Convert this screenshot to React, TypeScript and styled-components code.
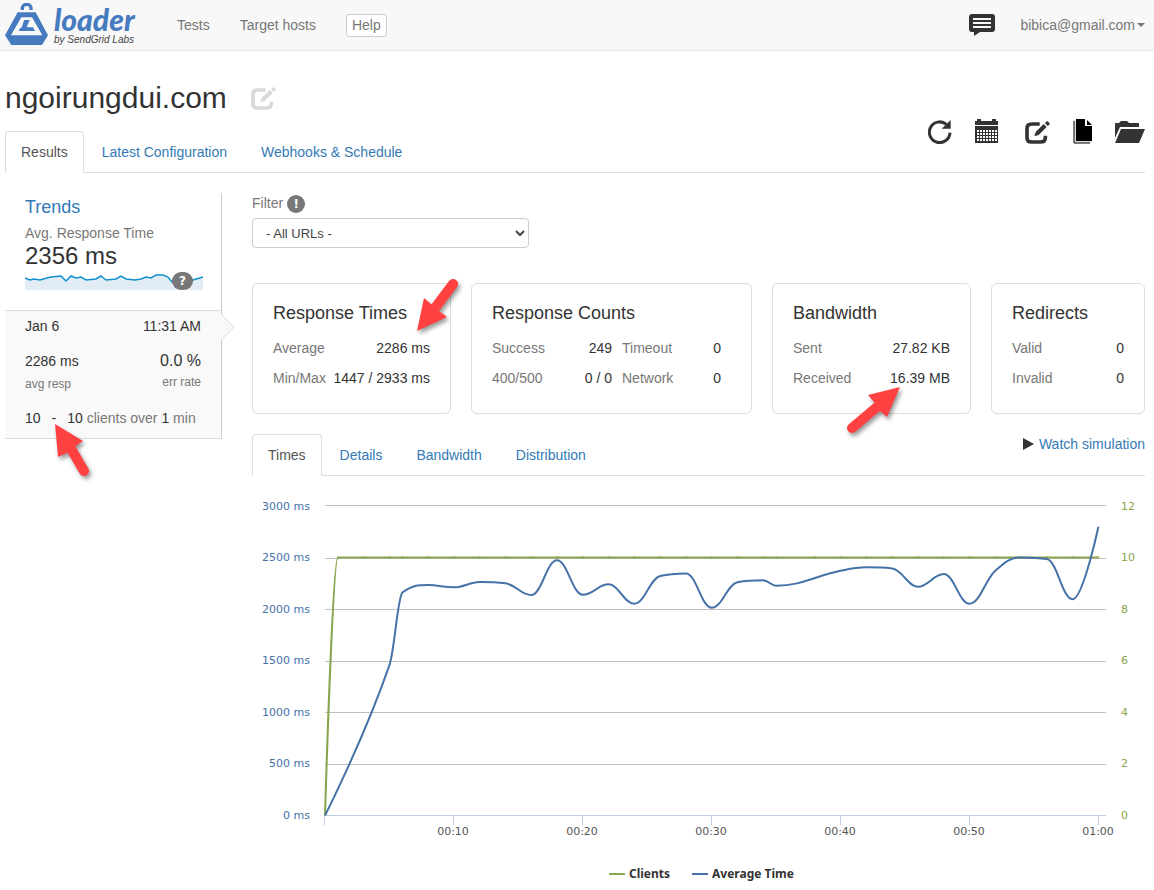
import React from "react";
import styled, { createGlobalStyle, css } from "styled-components";

const GlobalStyle = createGlobalStyle`
  *, *::before, *::after { box-sizing: border-box; }
  body {
    margin: 0;
    background: #fff;
    color: #333;
    font: 14px/20px "Liberation Sans", Arial, sans-serif;
  }
  a { color: #337ab7; text-decoration: none; }
  h1, h2, h3, p, dl, dd { margin: 0; font-weight: 400; }
`;

/* ---------- top bar ---------- */

const TopBar = styled.header`
  display: flex;
  align-items: center;
  height: 51px;
  padding: 0 9px 0 5px;
  background: #f8f8f8;
  border-bottom: 1px solid #e7e7e7;
`;

const Brand = styled.a`
  display: flex;
  align-items: flex-start;
  align-self: flex-start;
  gap: 6px;
  width: 156px;
  padding-top: 3px;
`;

const BrandText = styled.span`
  display: flex;
  flex-direction: column;
`;

const BrandName = styled.span`
  color: #467bbf;
  font: italic 900 30px/32px Lato, "Open Sans", sans-serif;
`;

const BrandLine = styled.span`
  color: #444;
  font-size: 10px;
  line-height: 10px;
  font-style: italic;
  white-space: nowrap;
`;

const MainNav = styled.nav`
  display: flex;
  align-items: center;
  gap: 30px;
  padding-left: 16px;
  flex: 1;
`;

const NavLink = styled.a<{ $boxed?: boolean }>`
  color: #777;
  ${(p) =>
    p.$boxed &&
    css`
      padding: 0 5px;
      line-height: 21px;
      background: #fff;
      border: 1px solid #ccc;
      border-radius: 3px;
    `}
`;

const PlainButton = styled.button`
  display: flex;
  align-items: center;
  padding: 0;
  border: 0;
  background: none;
  color: #333;
  font: inherit;
  cursor: pointer;
`;

const AccountButton = styled(PlainButton)`
  gap: 2px;
  margin-left: 25px;
  color: #777;
`;

const Caret = styled.span`
  border: 4px solid transparent;
  border-top-color: #777;
  border-bottom: 0;
`;

/* ---------- page heading ---------- */

const Page = styled.div`
  padding: 0 9px 0 5px;
`;

const PageHead = styled.div`
  display: flex;
  justify-content: space-between;
  align-items: flex-end;
  margin-top: 30px;
  border-bottom: 1px solid #ddd;
`;

const TitleRow = styled.div`
  display: flex;
  align-items: center;
  gap: 21px;
  height: 34px;
  margin-bottom: 16px;
`;

const Title = styled.h1`
  font-size: 30px;
  line-height: 34px;
`;

const Toolbar = styled.div`
  display: flex;
  align-items: center;
  gap: 23px;
  height: 27px;
  margin-bottom: 27px;
`;

const Tabs = styled.nav`
  display: flex;
  gap: 2px;
  margin-bottom: -1px;
`;

const Tab = styled.a<{ $active?: boolean }>`
  padding: 10px 15px;
  border-width: 1px;
  border-style: solid;
  border-color: ${(p) => (p.$active ? "#ddd #ddd #fff" : "transparent")};
  border-radius: 4px 4px 0 0;
  background: ${(p) => (p.$active ? "#fff" : "none")};
  color: ${(p) => (p.$active ? "#555" : "#337ab7")};
`;

const Columns = styled.div`
  display: flex;
  align-items: flex-start;
  gap: 30px;
  padding-top: 20px;
`;

/* ---------- sidebar ---------- */

const Sidebar = styled.aside`
  flex: none;
  width: 217px;
  border-right: 1px solid #ccc;
`;

const Trends = styled.section`
  position: relative;
  height: 117px;
  padding: 4px 18px 0 20px;
`;

const TrendsTitle = styled.h2`
  font-size: 18px;
  line-height: 20px;
`;

const Muted = styled.p`
  margin-top: 6px;
  color: #777;
`;

const BigValue = styled.p`
  font-size: 24px;
  line-height: 26px;
`;

const Spark = styled.svg`
  display: block;
  width: 100%;
  height: 18px;
  margin-top: 3px;
`;

const Badge = styled.span<{ $floating?: boolean }>`
  display: inline-flex;
  justify-content: center;
  align-items: center;
  width: ${(p) => (p.$floating ? 21 : 18)}px;
  height: 18px;
  border-radius: 9px;
  background: #777;
  color: #fff;
  font: bold 12px/18px "DejaVu Sans", sans-serif;
  ${(p) =>
    p.$floating &&
    css`
      position: absolute;
      right: 28px;
      bottom: 20px;
    `}
`;

const Run = styled.section`
  position: relative;
  height: 129px;
  padding: 5px 20px 0;
  border: solid #ddd;
  border-width: 1px 0;
  background: #f9f9f9;
`;

const RunRow = styled.div<{ $gap?: number; $small?: boolean }>`
  display: flex;
  justify-content: space-between;
  margin-top: ${(p) => p.$gap ?? 0}px;
  ${(p) => p.$small && "color: #777; font-size: 12px;"}
`;

const ErrorRate = styled.span`
  font-size: 16px;
`;

const ErrorLabel = styled.span`
  line-height: 16px;
`;

const ClientLine = styled.p`
  margin-top: 14px;
  color: #777;
  white-space: nowrap;
  b { color: #333; font-weight: 400; }
  i { margin: 0 11px; color: #333; font-style: normal; }
`;

const RunPointer = styled.svg`
  position: absolute;
  top: 2px;
  right: -14px;
  width: 14px;
  height: 28px;
`;

/* ---------- results ---------- */

const Results = styled.main`
  flex: 1;
  min-width: 0;
`;

const FilterLabel = styled.label`
  display: flex;
  align-items: flex-end;
  gap: 4px;
  color: #777;
`;

const FilterSelect = styled.select`
  display: block;
  width: 277px;
  height: 30px;
  margin-top: 5px;
  padding: 0 0 0 9px;
  border: 1px solid #ccc;
  border-radius: 4px;
  background: #fff;
  color: #444;
  font: 13px "Liberation Sans", Arial, sans-serif;
`;

const Cards = styled.div`
  display: grid;
  grid-template-columns: 199fr 281fr 199fr 154fr;
  gap: 20px;
  margin-top: 35px;
`;

const Card = styled.section`
  position: relative;
  min-width: 0;
  height: 131px;
  padding: 19px 20px;
  border: 1px solid #ddd;
  border-radius: 6px;
`;

const CardTitle = styled.h3`
  margin-bottom: 10px;
  font-size: 18px;
  line-height: 20px;
`;

const StatGroups = styled.div`
  display: grid;
  grid-template-columns: 120fr 99fr;
  gap: 10px;
  padding-right: 10px;
`;

const Stat = styled.div`
  display: flex;
  justify-content: space-between;
  line-height: 30px;
  white-space: nowrap;
  dt { color: #777; }
`;

const ChartHead = styled.div`
  display: flex;
  justify-content: space-between;
  align-items: flex-start;
  margin-top: 20px;
  border-bottom: 1px solid #ddd;
`;

const SimulationLink = styled.a`
  display: flex;
  align-items: center;
  gap: 5px;
`;

const ChartSvg = styled.svg`
  display: block;
  width: 100%;
  height: auto;
  font: 11px "DejaVu Sans", sans-serif;
`;

const Arrow = styled.svg<{ $top: number; $right: number }>`
  position: absolute;
  top: ${(p) => p.$top}px;
  right: ${(p) => p.$right}px;
  z-index: 2;
  overflow: visible;
  pointer-events: none;
  filter: drop-shadow(2px 3px 2px rgba(0, 0, 0, 0.4));
  path { fill: #ff4141; }
  line { stroke: #ff4141; stroke-width: 10; stroke-linecap: round; }
`;

/* ---------- drawings ---------- */

const Logo = () => (
  <svg width="43" height="42" viewBox="15 9 129 126" aria-hidden="true">
    <path d="M67 30v-6a13 11 0 0 1 26 0v6" fill="none" stroke="#467bbf" strokeWidth="10" />
    <path
      fill="#467bbf"
      fillRule="evenodd"
      d="M53 37H107L144 106L126 135H34L15 106ZM64 52L33 106H127L96 52Z"
    />
    <path fill="#467bbf" d="M72 60H89L80 82H99L105 93H56L61 83H65Z" />
  </svg>
);

const ChatIcon = () => (
  <svg width="26" height="22" viewBox="0 0 26 22" aria-hidden="true">
    <path fill="#333" d="M3 0H23a3 3 0 0 1 3 3V15a3 3 0 0 1-3 3H11L5 22V18H3a3 3 0 0 1-3-3V3a3 3 0 0 1 3-3z" />
    <path stroke="#f8f8f8" strokeWidth="2" d="M4 5H22M4 9H22M4 13H22" />
  </svg>
);

const EditIcon = ({ color }: { color: string }) => (
  <svg width="28" height="24" viewBox="-9 -3 84 72" aria-hidden="true">
    <path
      d="M44 9H20Q6 9 6 22V50Q6 63 20 63H46Q61 63 61 50V44"
      fill="none"
      stroke={color}
      strokeWidth="11"
    />
    <path fill={color} d="M28 46L32 33L56 9L65 18L41 42ZM60 6L65 1Q68 0 70 3L74 7Q75 9 73 11L68 15Z" />
  </svg>
);

const RefreshIcon = () => (
  <svg width="24" height="25" viewBox="83 357 72 75" aria-hidden="true">
    <path d="M149 398A31 31 0 1 1 138 373" fill="none" stroke="#333" strokeWidth="9" />
    <path fill="#333" d="M151 360V386H124Z" />
  </svg>
);

const CalendarIcon = () => (
  <svg width="24" height="25" viewBox="0 0 24 25" aria-hidden="true">
    <path fill="#333" d="M0 2H2V0H6V2H17V0H21V2H23V6H0ZM0 7H23V24H0Z" />
    <path
      stroke="#fff"
      strokeWidth="2"
      strokeDasharray="2 1"
      d="M2 12H22M2 15H22M2 18H22M2 21H22"
    />
  </svg>
);

const FilesIcon = () => (
  <svg width="19" height="25" viewBox="0 0 19 25" aria-hidden="true">
    <path fill="#000" d="M3 0H12V7H19V22H3ZM14 1L19 6H14Z" />
    <path d="M2 1V23H18" fill="none" stroke="#bbb" strokeWidth="1" />
    <path d="M1 2V24H17" fill="none" stroke="#000" strokeWidth="1" />
  </svg>
);

const FolderIcon = () => (
  <svg width="30" height="22" viewBox="0 0 30 22" aria-hidden="true">
    <path fill="#333" d="M0 2H4L6 0H12L14 2H24V6H5L0 17Z" />
    <path fill="#333" d="M6 8H30L24 22H0Z" />
  </svg>
);

const SPARK =
  "0,6 5,8 9,7 15,8 22,6 26,5 36,4 41,9 46,4 51,6 56,5 61,8 71,7 76,4 81,8 91,7 96,4 101,7 110,8 116,7 121,5 126,6 131,3 138,3 143,5 147,10 160,10 168,8 178,5";

/* ---------- response chart ---------- */

type Point = [number, number];

const ORIGIN_X = 73;
const SECOND = 12.89;
const BASE_Y = 339;

const averages: Point[] = [
  [0, 0], [5, 1460], [6, 2165], [8, 2237], [10, 2215], [12, 2266], [14, 2254],
  [16, 2140], [18, 2477], [20, 2143], [22, 2244], [24, 2056], [26, 2325],
  [28, 2350], [30, 2017], [32, 2264], [34, 2283], [35, 2231], [40, 2376],
  [42, 2409], [44, 2399], [46, 2221], [48, 2344], [50, 2056], [52, 2376],
  [54, 2506], [56, 2490], [58, 2099], [60, 2803],
];

const clientTimes = [
  1, 3, 5, 6, 8, 10, 12, 14, 16, 18, 20, 22, 24, 26, 28, 30, 32, 34, 35, 38,
  40, 42, 44, 46, 48, 50, 52, 54, 56, 58, 60,
];
const clients: Point[] = [[0, 0], ...clientTimes.map((t): Point => [t, 10])];

const place = (data: Point[], scale: number): Point[] =>
  data.map(([t, v]) => [ORIGIN_X + t * SECOND, BASE_Y + 0.5 - v * scale]);

/* Smooth curve whose handles never overshoot the neighbouring points. */
function spline(pts: Point[]): string {
  let d = `M${pts[0][0]} ${pts[0][1]}`;
  let handle: Point = pts[0];
  for (let i = 1; i < pts.length; i++) {
    const [x, y] = pts[i];
    const [lx, ly] = pts[i - 1];
    let left: Point = [x, y];
    let right: Point = [x, y];
    if (i < pts.length - 1) {
      const [nx, ny] = pts[i + 1];
      const leftX = (1.5 * x + lx) / 2.5;
      const rightX = (1.5 * x + nx) / 2.5;
      let leftY = (1.5 * y + ly) / 2.5;
      let rightY = (1.5 * y + ny) / 2.5;
      const fix = ((rightY - leftY) * (rightX - x)) / (rightX - leftX) + y - rightY;
      leftY += fix;
      rightY += fix;
      if (leftY > ly && leftY > y) {
        leftY = Math.max(ly, y);
        rightY = 2 * y - leftY;
      } else if (leftY < ly && leftY < y) {
        leftY = Math.min(ly, y);
        rightY = 2 * y - leftY;
      }
      if (rightY > ny && rightY > y) {
        rightY = Math.max(ny, y);
        leftY = 2 * y - rightY;
      } else if (rightY < ny && rightY < y) {
        rightY = Math.min(ny, y);
        leftY = 2 * y - rightY;
      }
      left = [leftX, leftY];
      right = [rightX, rightY];
    }
    d += `C${handle[0]} ${handle[1]} ${left[0]} ${left[1]} ${x} ${y}`;
    handle = right;
  }
  return d;
}

const LEVELS = [
  { ms: "3000 ms", clients: "12", line: 29, text: 34 },
  { ms: "2500 ms", clients: "10", line: 82, text: 85 },
  { ms: "2000 ms", clients: "8", line: 133, text: 137 },
  { ms: "1500 ms", clients: "6", line: 185, text: 188 },
  { ms: "1000 ms", clients: "4", line: 236, text: 240 },
  { ms: "500 ms", clients: "2", line: 288, text: 291 },
  { ms: "0 ms", clients: "0", line: 339, text: 343 },
];

const TICKS = [
  { x: 72, label: "" },
  { x: 201, label: "00:10" },
  { x: 330, label: "00:20" },
  { x: 459, label: "00:30" },
  { x: 588, label: "00:40" },
  { x: 717, label: "00:50" },
  { x: 846, label: "01:00" },
];

const LegendText = styled.text`
  fill: #333;
  font: bold 12px "Noto Sans", "Open Sans", sans-serif;
`;

const Chart = () => (
  <ChartSvg viewBox="0 0 893 414" role="img" aria-label="Average time and clients over one minute">
    {LEVELS.map((l) => (
      <g key={l.ms}>
        <rect x="73" y={l.line} width="781" height="1" fill={l.ms === "0 ms" ? "#c0d0e0" : "#c0c0c0"} />
        <text x="58" y={l.text} textAnchor="end" fill="#4572a7">{l.ms}</text>
        <text x="869" y={l.text} fill="#89a54e">{l.clients}</text>
      </g>
    ))}
    {TICKS.map((t) => (
      <g key={t.x}>
        <rect x={t.x} y="339" width="1" height="10" fill="#c0d0e0" />
        <text x={t.x} y="359" textAnchor="middle" fill="#555">{t.label}</text>
      </g>
    ))}
    <path d={spline(place(clients, 25.8))} fill="none" stroke="#89a54e" strokeWidth="2" />
    {clientTimes.map((t) => (
      <rect key={t} x={ORIGIN_X + t * SECOND - 1} y="80" width="2" height="3" fill="#89a54e" opacity="0.5" />
    ))}
    <path
      d={spline(place(averages, 0.103))}
      fill="none"
      stroke="#4572a7"
      strokeWidth="2"
      strokeLinejoin="round"
    />
    <rect x="357" y="397" width="16" height="2" fill="#89a54e" />
    <LegendText x="377" y="402">Clients</LegendText>
    <rect x="440" y="397" width="16" height="2" fill="#4572a7" />
    <LegendText x="460" y="402">Average Time</LegendText>
  </ChartSvg>
);

const StatLine = ({ name, value }: { name: string; value: string }) => (
  <Stat>
    <dt>{name}</dt>
    <dd>{value}</dd>
  </Stat>
);

export default function App() {
  return (
    <>
      <GlobalStyle />
      <TopBar>
        <Brand href="#">
          <Logo />
          <BrandText>
            <BrandName>loader</BrandName>
            <BrandLine>by SendGrid Labs</BrandLine>
          </BrandText>
        </Brand>
        <MainNav>
          <NavLink href="#tests">Tests</NavLink>
          <NavLink href="#hosts">Target hosts</NavLink>
          <NavLink href="#help" $boxed>Help</NavLink>
        </MainNav>
        <PlainButton type="button" aria-label="Messages"><ChatIcon /></PlainButton>
        <AccountButton type="button">bibica@gmail.com<Caret /></AccountButton>
      </TopBar>

      <Page>
        <PageHead>
          <div>
            <TitleRow>
              <Title>ngoirungdui.com</Title>
              <PlainButton type="button" aria-label="Rename test"><EditIcon color="#d9d9d9" /></PlainButton>
            </TitleRow>
            <Tabs>
              <Tab href="#results" $active>Results</Tab>
              <Tab href="#configuration">Latest Configuration</Tab>
              <Tab href="#webhooks">Webhooks &amp; Schedule</Tab>
            </Tabs>
          </div>
          <Toolbar>
            <PlainButton type="button" aria-label="Run again"><RefreshIcon /></PlainButton>
            <PlainButton type="button" aria-label="Schedule"><CalendarIcon /></PlainButton>
            <PlainButton type="button" aria-label="Edit"><EditIcon color="#333" /></PlainButton>
            <PlainButton type="button" aria-label="Copy"><FilesIcon /></PlainButton>
            <PlainButton type="button" aria-label="Archive"><FolderIcon /></PlainButton>
          </Toolbar>
        </PageHead>

        <Columns>
          <Sidebar>
            <Trends>
              <TrendsTitle><a href="#trends">Trends</a></TrendsTitle>
              <Muted>Avg. Response Time</Muted>
              <BigValue>2356 ms</BigValue>
              <Spark viewBox="0 0 178 18" preserveAspectRatio="none" aria-hidden="true">
                <polygon points={`0,18 ${SPARK} 178,18`} fill="#e2ecf4" />
                <polyline points={SPARK} fill="none" stroke="#1090cd" strokeWidth="1.5" />
              </Spark>
              <Badge $floating>?</Badge>
            </Trends>
            <Run>
              <RunRow><span>Jan 6</span><span>11:31 AM</span></RunRow>
              <RunRow $gap={15}><span>2286 ms</span><ErrorRate>0.0 %</ErrorRate></RunRow>
              <RunRow $gap={3} $small><span>avg resp</span><ErrorLabel>err rate</ErrorLabel></RunRow>
              <ClientLine><b>10</b><i>-</i><b>10</b> clients over <b>1</b> min</ClientLine>
              <RunPointer viewBox="0 0 14 28" aria-hidden="true">
                <path d="M0 1L13 14L0 27" fill="#f9f9f9" stroke="#d5dde0" />
              </RunPointer>
              <Arrow $top={113} $right={132} width="34" height="52" viewBox="55 423 34 52" aria-hidden="true">
                <path d="M55 423L83 440L76 445L67 452L58 456Z" />
                <line x1="70" y1="446" x2="84" y2="470" />
              </Arrow>
            </Run>
          </Sidebar>

          <Results>
            <FilterLabel htmlFor="url-filter">Filter <Badge>!</Badge></FilterLabel>
            <FilterSelect id="url-filter">
              <option>- All URLs -</option>
            </FilterSelect>

            <Cards>
              <Card>
                <CardTitle>Response Times</CardTitle>
                <dl>
                  <StatLine name="Average" value="2286 ms" />
                  <StatLine name="Min/Max" value="1447 / 2933 ms" />
                </dl>
                <Arrow $top={-5} $right={-8} width="41" height="52" viewBox="417 279 41 52" aria-hidden="true">
                  <path d="M417 331L424 298L431 304L439 311L447 317Z" />
                  <line x1="435" y1="308" x2="453" y2="284" />
                </Arrow>
              </Card>
              <Card>
                <CardTitle>Response Counts</CardTitle>
                <StatGroups>
                  <dl>
                    <StatLine name="Success" value="249" />
                    <StatLine name="400/500" value="0 / 0" />
                  </dl>
                  <dl>
                    <StatLine name="Timeout" value="0" />
                    <StatLine name="Network" value="0" />
                  </dl>
                </StatGroups>
              </Card>
              <Card>
                <CardTitle>Bandwidth</CardTitle>
                <dl>
                  <StatLine name="Sent" value="27.82 KB" />
                  <StatLine name="Received" value="16.39 MB" />
                </dl>
                <Arrow $top={103} $right={70} width="53" height="46" viewBox="847 387 53 46" aria-hidden="true">
                  <path d="M900 387L868 395L874 402L880 411L887 417Z" />
                  <line x1="877" y1="407" x2="852" y2="428" />
                </Arrow>
              </Card>
              <Card>
                <CardTitle>Redirects</CardTitle>
                <dl>
                  <StatLine name="Valid" value="0" />
                  <StatLine name="Invalid" value="0" />
                </dl>
              </Card>
            </Cards>

            <ChartHead>
              <Tabs>
                <Tab href="#times" $active>Times</Tab>
                <Tab href="#details">Details</Tab>
                <Tab href="#bandwidth">Bandwidth</Tab>
                <Tab href="#distribution">Distribution</Tab>
              </Tabs>
              <SimulationLink href="#simulation">
                <svg width="11" height="12" viewBox="0 0 11 12" aria-hidden="true">
                  <path d="M0 0L11 6L0 12Z" fill="#333" />
                </svg>
                Watch simulation
              </SimulationLink>
            </ChartHead>
            <Chart />
          </Results>
        </Columns>
      </Page>
    </>
  );
}
